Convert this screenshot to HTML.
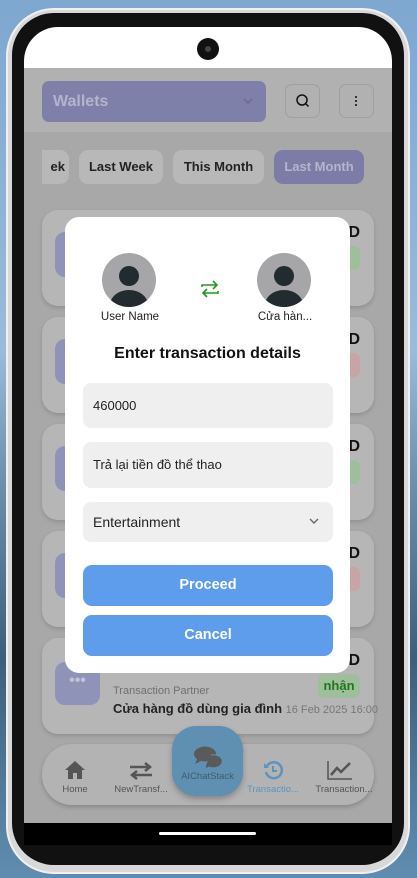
<!DOCTYPE html>
<html><head><meta charset="utf-8"><style>
*{margin:0;padding:0;box-sizing:border-box}
body{width:417px;height:878px;overflow:hidden;position:relative;font-family:"Liberation Sans","Noto Sans CJK SC",sans-serif;
background:linear-gradient(180deg,#7ea7d0 0%,#9bbbd9 40%,#6d8fa8 55%,#3f5f79 75%,#5f8db0 100%)}
.abs{position:absolute}
.frame{left:6px;top:8px;width:404px;height:866px;border-radius:48px;background:#d8d8d8;border:2px solid #f0f0f0}
.bez{left:12px;top:13px;width:392px;height:852px;border-radius:42px;background:#111}
.screen{left:24px;top:27px;width:368px;height:818px;border-radius:34px 34px 0 0;overflow:hidden;background:#000}
.card{position:absolute;left:18px;width:332px;height:96px;border-radius:16px;background:#b6b6b6;box-shadow:0 2px 4px rgba(0,0,0,.15)}
.card .ic{position:absolute;left:13px;top:22px;width:45px;height:45px;border-radius:10px;background:#8f93b8}
.card .d{position:absolute;right:14px;top:14px;font-weight:bold;font-size:16px;color:#111}
.card .b{position:absolute;right:14px;top:36px;width:14px;height:24px;border-radius:0 6px 6px 0}
.chip{position:absolute;top:123px;height:34px;border-radius:9px;background:#b8b8b8;font-weight:bold;font-size:13px;color:#222;text-align:center;line-height:34px}
.inp{position:absolute;left:18px;width:250px;border-radius:8px;background:#efefef;font-size:13px;color:#222;padding-left:10px}
.btn{position:absolute;left:18px;width:250px;height:41px;border-radius:9px;background:#5e9cec;color:#fff;font-weight:bold;font-size:14.5px;text-align:center;line-height:41px}
.nav{position:absolute;top:757px;font-size:9.5px;color:#555;text-align:center;width:60px}
</style></head><body>
<div class="abs frame"></div>
<div class="abs bez"></div>
<div class="abs screen">
  <div class="abs" style="left:0;top:0;width:368px;height:41px;background:#fff"></div>
  <div class="abs" style="left:173px;top:11px;width:22px;height:22px;border-radius:50%;background:#111"><div class="abs" style="left:8px;top:8px;width:6px;height:6px;border-radius:50%;background:#444"></div></div>
  <div class="abs" style="left:0;top:41px;width:368px;height:64px;background:#b1b1b1"></div>
  <div class="abs" style="left:0;top:105px;width:368px;height:691px;background:#a8a8a8"></div>
  <div class="abs" style="left:18px;top:54px;width:224px;height:41px;border-radius:7px;background:#7f80a9;color:#b3b4cc;font-weight:bold;font-size:16px;line-height:41px;padding-left:11px">Wallets
    <svg class="abs" style="right:12px;top:16px" width="12" height="8" viewBox="0 0 12 8"><path d="M2 2l4 4 4-4" stroke="#6a6b8c" stroke-width="1.5" fill="none"/></svg></div>
  <div class="abs" style="left:261px;top:57px;width:35px;height:34px;border-radius:7px;border:1.5px solid #a0a0a0"><svg class="abs" style="left:9px;top:8px" width="16" height="16" viewBox="0 0 16 16"><circle cx="7" cy="7" r="5" stroke="#111" stroke-width="1.5" fill="none"/><path d="M10.5 10.5l3 3" stroke="#111" stroke-width="1.5"/></svg></div>
  <div class="abs" style="left:315px;top:57px;width:35px;height:34px;border-radius:7px;border:1.5px solid #a0a0a0"><div class="abs" style="left:15px;top:11px;width:2px;height:10px;background:repeating-linear-gradient(#333 0 2px,transparent 2px 4px)"></div></div>
  <div class="chip" style="left:18px;width:27px;border-radius:0 9px 9px 0;text-align:right;padding-right:4px">ek</div>
  <div class="chip" style="left:55px;width:84px">Last Week</div>
  <div class="chip" style="left:149px;width:91px">This Month</div>
  <div class="chip" style="left:250px;width:90px;background:#7c7ca7;color:#b5b5cd">Last Month</div>
  <div class="card" style="top:183px"><div class="ic"></div><div class="d">D</div><div class="b" style="background:#9fbf9c"></div></div>
  <div class="card" style="top:290px"><div class="ic"></div><div class="d">D</div><div class="b" style="background:#c9a4a4"></div></div>
  <div class="card" style="top:397px"><div class="ic"></div><div class="d">D</div><div class="b" style="background:#9fbf9c"></div></div>
  <div class="card" style="top:504px"><div class="ic"></div><div class="d">D</div><div class="b" style="background:#c9a4a4"></div></div>
  <div class="card" style="top:611px"><div class="ic" style="top:24px;height:43px"><div style="color:#c0c2d8;font-size:16px;text-align:center;line-height:38px;font-weight:bold">•••</div></div><div class="d">D</div>
    <div class="abs" style="right:14px;top:36px;width:42px;height:24px;border-radius:6px;background:#9fbf9c;color:#1c7a1c;font-weight:bold;font-size:13px;text-align:center;line-height:24px">nhận</div>
    <div class="abs" style="left:71px;top:47px;font-size:11px;color:#707070">Transaction Partner</div>
    <div class="abs" style="left:71px;top:63px;font-size:13px;font-weight:bold;color:#222;white-space:nowrap">Cửa hàng đồ dùng gia đình <span style="font-weight:normal;font-size:11px;color:#777">16 Feb 2025 16:00</span></div>
  </div>
  <div class="abs" style="left:18px;top:717px;width:332px;height:61px;border-radius:30px;background:#b3b3b3;box-shadow:0 2px 5px rgba(0,0,0,.2)"></div>
  <svg class="abs" style="left:40px;top:733px" width="22" height="20" viewBox="0 0 22 20"><path d="M11 1L1 10h3v9h5v-6h4v6h5v-9h3z" fill="#555"/></svg>
  <div class="nav" style="left:21px">Home</div>
  <svg class="abs" style="left:104px;top:735px" width="26" height="18" viewBox="0 0 26 18"><path d="M2 5h19M17 1l5 4-5 4M24 13H5M9 9l-5 4 5 4" stroke="#555" stroke-width="2.5" fill="none"/></svg>
  <div class="nav" style="left:87px">NewTransf...</div>
  <div class="nav" style="left:219px;color:#5e93bd">Transactio...</div>
  <svg class="abs" style="left:239px;top:733px" width="20" height="20" viewBox="0 0 20 20"><path d="M4 6A8 8 0 1 1 3 12" stroke="#5e93bd" stroke-width="2.5" fill="none"/><path d="M1 3v5h5" fill="#5e93bd"/><path d="M10 6v5h4" stroke="#5e93bd" stroke-width="2" fill="none"/></svg>
  <svg class="abs" style="left:303px;top:733px" width="26" height="20" viewBox="0 0 26 20"><path d="M1 1v18h24" stroke="#555" stroke-width="1.5" fill="none"/><path d="M4 15l6-7 4 4 9-9" stroke="#555" stroke-width="2.5" fill="none"/></svg>
  <div class="nav" style="left:284px;width:72px">Transaction...</div>
  <div class="abs" style="left:148px;top:699px;width:71px;height:70px;border-radius:24px;background:#5f90b1;box-shadow:0 3px 6px rgba(0,0,0,.25)">
    <svg class="abs" style="left:21px;top:20px" width="30" height="24" viewBox="0 0 30 24"><ellipse cx="12" cy="8" rx="11" ry="7.5" fill="#5a5a5a"/><path d="M4 13l-2 5 6-3z" fill="#5a5a5a"/><path d="M18 9a9 6.5 0 1 1-2 12l-4 2 1-4" fill="#5a5a5a" stroke="#5f90b1" stroke-width="1"/></svg>
    <div class="abs" style="left:0;top:45px;width:71px;text-align:center;font-size:9.5px;color:#3d5d73">AIChatStack</div>
  </div>
  <div class="abs" style="left:0;top:796px;width:368px;height:22px;background:#000"></div>
  <div class="abs" style="left:135px;top:805px;width:97px;height:3px;border-radius:2px;background:#fff"></div>

  <!-- modal -->
  <div class="abs" style="left:41px;top:190px;width:285px;height:456px;border-radius:14px;background:#fff">
    <div class="abs" style="left:37px;top:36px;width:54px;height:54px;border-radius:50%;background:#a6a6a8;overflow:hidden">
      <div class="abs" style="left:17px;top:13px;width:20px;height:20px;border-radius:50%;background:#222b30"></div>
      <div class="abs" style="left:8px;top:37px;width:38px;height:30px;border-radius:50%;background:#222b30"></div></div>
    <div class="abs" style="left:192px;top:36px;width:54px;height:54px;border-radius:50%;background:#a6a6a8;overflow:hidden">
      <div class="abs" style="left:17px;top:13px;width:20px;height:20px;border-radius:50%;background:#222b30"></div>
      <div class="abs" style="left:8px;top:37px;width:38px;height:30px;border-radius:50%;background:#222b30"></div></div>
    <div class="abs" style="left:20px;top:94px;width:90px;text-align:center;font-size:11.5px;color:#222">User Name</div>
    <div class="abs" style="left:175px;top:94px;width:90px;text-align:center;font-size:11.5px;color:#222">Cửa hàn...</div>
    <svg class="abs" style="left:135px;top:62px" width="20" height="20" viewBox="0 0 20 20"><path d="M2 8V6h14M13 2l4 4-4 4M18 12v2H4M7 18l-4-4 4-4" stroke="#1e9a1e" stroke-width="1.6" fill="none"/></svg>
    <div class="abs" style="left:0;top:128px;width:285px;text-align:center;font-weight:bold;font-size:16px;color:#111">Enter transaction details</div>
    <div class="inp" style="top:166px;height:45px;line-height:45px">460000</div>
    <div class="inp" style="top:225px;height:46px;line-height:46px">Trả lại tiền đồ thể thao</div>
    <div class="inp" style="top:285px;height:40px;line-height:40px;font-size:14px">Entertainment
      <svg class="abs" style="right:14px;top:16px" width="10" height="7" viewBox="0 0 10 7"><path d="M1 1l4 4 4-4" stroke="#666" stroke-width="1.4" fill="none"/></svg></div>
    <div class="btn" style="top:348px">Proceed</div>
    <div class="btn" style="top:398px">Cancel</div>
  </div>
</div>
</body></html>
